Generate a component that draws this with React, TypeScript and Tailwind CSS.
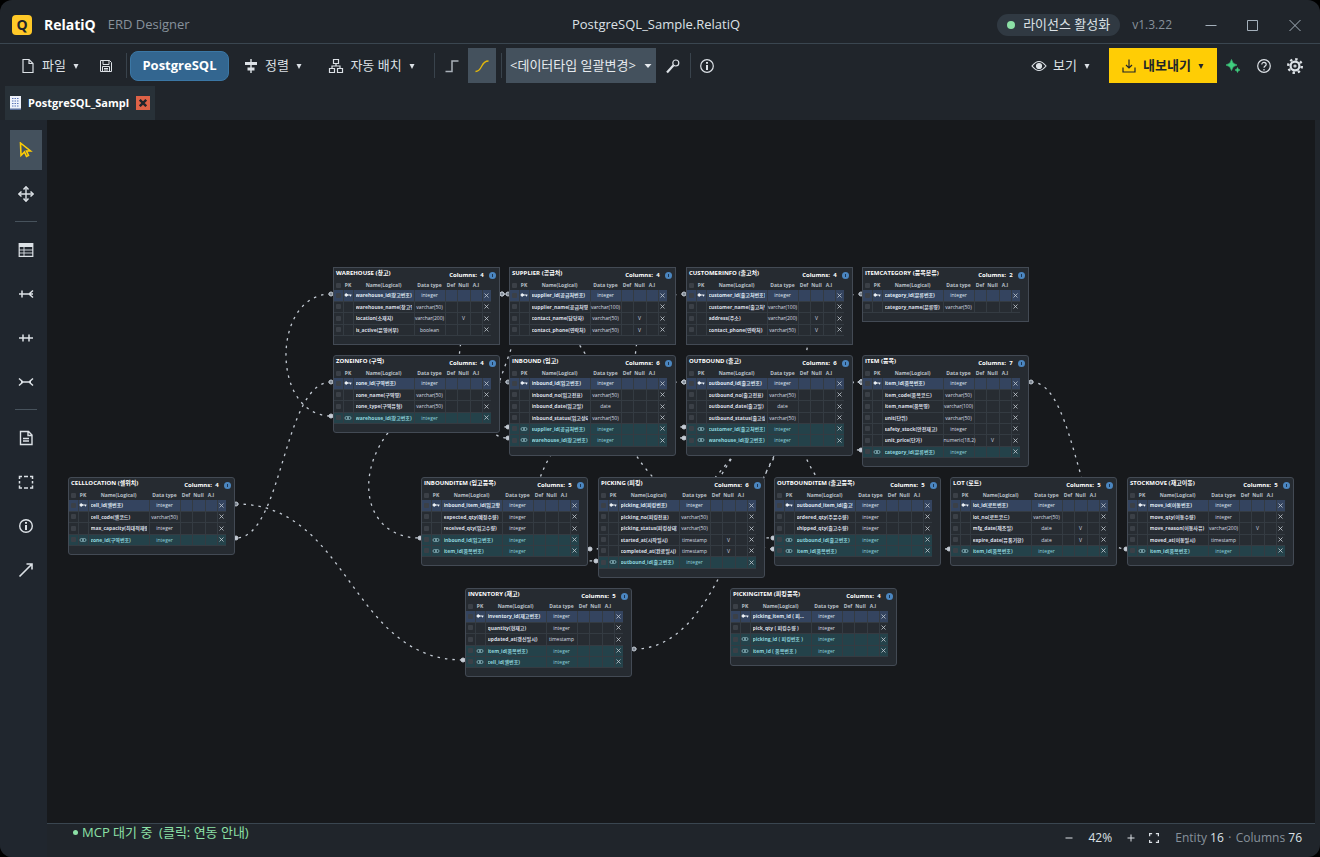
import type { ReactNode } from 'react';

type Kind = 'pk' | 'fk' | '';
type Column = [name: string, type: string, kind?: Kind, nullable?: boolean];

type Entity = {
  title: string;
  x: number;
  y: number;
  square?: boolean;
  columns: Column[];
};

const entities: Entity[] = [
  {
    title: 'WAREHOUSE (창고)',
    x: 286,
    y: 147,
    square: true,
    columns: [
      ['warehouse_id(창고번호)', 'integer', 'pk'],
      ['warehouse_name(창고명)', 'varchar(50)'],
      ['location(소재지)', 'varchar(200)', '', true],
      ['is_active(운영여부)', 'boolean'],
    ],
  },
  {
    title: 'SUPPLIER (공급처)',
    x: 462,
    y: 147,
    square: true,
    columns: [
      ['supplier_id(공급처번호)', 'integer', 'pk'],
      ['supplier_name(공급처명)', 'varchar(100)'],
      ['contact_name(담당자)', 'varchar(50)', '', true],
      ['contact_phone(연락처)', 'varchar(50)', '', true],
    ],
  },
  {
    title: 'CUSTOMERINFO (출고처)',
    x: 639,
    y: 147,
    square: true,
    columns: [
      ['customer_id(출고처번호)', 'integer', 'pk'],
      ['customer_name(출고처명)', 'varchar(100)'],
      ['address(주소)', 'varchar(200)', '', true],
      ['contact_phone(연락처)', 'varchar(50)', '', true],
    ],
  },
  {
    title: 'ITEMCATEGORY (품목분류)',
    x: 815,
    y: 147,
    square: true,
    columns: [
      ['category_id(분류번호)', 'integer', 'pk'],
      ['category_name(분류명)', 'varchar(50)'],
    ],
  },
  {
    title: 'ZONEINFO (구역)',
    x: 286,
    y: 235,
    columns: [
      ['zone_id(구역번호)', 'integer', 'pk'],
      ['zone_name(구역명)', 'varchar(50)'],
      ['zone_type(구역유형)', 'varchar(50)'],
      ['warehouse_id(창고번호)', 'integer', 'fk'],
    ],
  },
  {
    title: 'INBOUND (입고)',
    x: 462,
    y: 235,
    columns: [
      ['inbound_id(입고번호)', 'integer', 'pk'],
      ['inbound_no(입고전표)', 'varchar(50)'],
      ['inbound_date(입고일)', 'date'],
      ['inbound_status(입고상태)', 'varchar(50)'],
      ['supplier_id(공급처번호)', 'integer', 'fk'],
      ['warehouse_id(창고번호)', 'integer', 'fk'],
    ],
  },
  {
    title: 'OUTBOUND (출고)',
    x: 639,
    y: 235,
    columns: [
      ['outbound_id(출고번호)', 'integer', 'pk'],
      ['outbound_no(출고전표)', 'varchar(50)'],
      ['outbound_date(출고일)', 'date'],
      ['outbound_status(출고상태)', 'varchar(50)'],
      ['customer_id(출고처번호)', 'integer', 'fk'],
      ['warehouse_id(창고번호)', 'integer', 'fk'],
    ],
  },
  {
    title: 'ITEM (품목)',
    x: 815,
    y: 235,
    columns: [
      ['item_id(품목번호)', 'integer', 'pk'],
      ['item_code(품목코드)', 'varchar(50)'],
      ['item_name(품목명)', 'varchar(100)'],
      ['unit(단위)', 'varchar(50)'],
      ['safety_stock(안전재고)', 'integer'],
      ['unit_price(단가)', 'numeric(18,2)', '', true],
      ['category_id(분류번호)', 'integer', 'fk'],
    ],
  },
  {
    title: 'CELLLOCATION (셀위치)',
    x: 21,
    y: 357,
    columns: [
      ['cell_id(셀번호)', 'integer', 'pk'],
      ['cell_code(셀코드)', 'varchar(50)'],
      ['max_capacity(최대적재량)', 'integer'],
      ['zone_id(구역번호)', 'integer', 'fk'],
    ],
  },
  {
    title: 'INBOUNDITEM (입고품목)',
    x: 374,
    y: 357,
    columns: [
      ['inbound_item_id(입고항목)', 'integer', 'pk'],
      ['expected_qty(예정수량)', 'integer'],
      ['received_qty(입고수량)', 'integer'],
      ['inbound_id(입고번호)', 'integer', 'fk'],
      ['item_id(품목번호)', 'integer', 'fk'],
    ],
  },
  {
    title: 'PICKING (피킹)',
    x: 551,
    y: 357,
    columns: [
      ['picking_id(피킹번호)', 'integer', 'pk'],
      ['picking_no(피킹전표)', 'varchar(50)'],
      ['picking_status(피킹상태)', 'varchar(50)'],
      ['started_at(시작일시)', 'timestamp', '', true],
      ['completed_at(완료일시)', 'timestamp', '', true],
      ['outbound_id(출고번호)', 'integer', 'fk'],
    ],
  },
  {
    title: 'OUTBOUNDITEM (출고품목)',
    x: 727,
    y: 357,
    columns: [
      ['outbound_item_id(출고항목)', 'integer', 'pk'],
      ['ordered_qty(주문수량)', 'integer'],
      ['shipped_qty(출고수량)', 'integer'],
      ['outbound_id(출고번호)', 'integer', 'fk'],
      ['item_id(품목번호)', 'integer', 'fk'],
    ],
  },
  {
    title: 'LOT (로트)',
    x: 903,
    y: 357,
    columns: [
      ['lot_id(로트번호)', 'integer', 'pk'],
      ['lot_no(로트코드)', 'varchar(50)'],
      ['mfg_date(제조일)', 'date', '', true],
      ['expire_date(유통기한)', 'date', '', true],
      ['item_id(품목번호)', 'integer', 'fk'],
    ],
  },
  {
    title: 'STOCKMOVE (재고이동)',
    x: 1080,
    y: 357,
    columns: [
      ['move_id(이동번호)', 'integer', 'pk'],
      ['move_qty(이동수량)', 'integer'],
      ['move_reason(이동사유)', 'varchar(200)', '', true],
      ['moved_at(이동일시)', 'timestamp'],
      ['item_id(품목번호)', 'integer', 'fk'],
    ],
  },
  {
    title: 'INVENTORY (재고)',
    x: 418,
    y: 468,
    columns: [
      ['inventory_id(재고번호)', 'integer', 'pk'],
      ['quantity(현재고)', 'integer'],
      ['updated_at(갱신일시)', 'timestamp'],
      ['item_id(품목번호)', 'integer', 'fk'],
      ['cell_id(셀번호)', 'integer', 'fk'],
    ],
  },
  {
    title: 'PICKINGITEM (피킹품목)',
    x: 683,
    y: 468,
    columns: [
      ['picking_item_id ( 피...', 'integer', 'pk'],
      ['pick_qty ( 피킹수량 )', 'integer'],
      ['picking_id ( 피킹번호 )', 'integer', 'fk'],
      ['item_id ( 품목번호 )', 'integer', 'fk'],
    ],
  },
];

// x1, y1, x2, y2, then the x of both control points
const relations: number[][] = [
  [284, 174, 284, 296, 224, 224],
  [284, 262, 189, 418, 236, 236],
  [189, 384, 416, 540, 303, 303],
  [587, 529, 814, 262, 700, 700],
  [984, 262, 1079, 429, 1031, 1031],
  [814, 262, 902, 429, 687, 775],
  [814, 262, 726, 429, 751, 663],
  [814, 262, 543, 429, 678, 678],
  [814, 262, 640, 440, 680, 640],
  [637, 262, 726, 418, 500, 625],
  [637, 262, 549, 441, 494, 432],
  [461, 262, 373, 418, 306, 286],
  [461, 174, 461, 307, 396, 396],
  [455, 174, 461, 318, 513, 403],
  [455, 174, 637, 318, 546, 546],
  [637, 174, 637, 307, 572, 572],
  [814, 174, 814, 330, 739, 739],
];

const rowColor = {
  pk: 'bg-[#34445f] text-[#dfe7f2]',
  fk: 'bg-[#24424a] text-[#8fd3dc]',
  '': 'bg-[#272c32] text-[#d9dee4]',
};

function Svg({ children, size = 16 }: { children: ReactNode; size?: number }) {
  return (
    <svg
      width={size}
      height={size}
      viewBox="0 0 16 16"
      fill="none"
      stroke="currentColor"
      strokeWidth="1.2"
      className="shrink-0"
      aria-hidden="true"
    >
      {children}
    </svg>
  );
}

function KindIcon({ kind }: { kind: Kind }) {
  if (kind === 'pk') {
    return (
      <svg viewBox="0 0 8 6" className="mx-auto h-[6px] w-2" fill="none" stroke="#eef2f6">
        <circle cx="2.2" cy="3" r="1.2" fill="#eef2f6" />
        <path d="M3 3h4.5M6.5 3v1.4" />
      </svg>
    );
  }
  if (kind === 'fk') {
    return (
      <svg viewBox="0 0 8 6" className="mx-auto h-[6px] w-2" fill="none" stroke="#8fb9c2" strokeWidth="0.8">
        <rect x="1" y="1.5" width="3.4" height="3" rx="1.5" />
        <rect x="3.6" y="1.5" width="3.4" height="3" rx="1.5" />
      </svg>
    );
  }
  return null;
}

function TinyCheck({ label }: { label: string }) {
  return (
    <input
      type="checkbox"
      aria-label={label}
      className="mx-auto block h-[5px] w-[5px] appearance-none rounded-[1px] bg-[#3b4047]"
    />
  );
}

function EntityCard({ entity }: { entity: Entity }) {
  const { title, x, y, square, columns } = entity;

  return (
    <section
      className={`absolute w-[167px] border border-[#434a54] bg-[#262b31] pb-2 ${square ? '' : 'rounded-[3px]'}`}
      style={{ left: x, top: y }}
    >
      <header className="flex h-3 items-center pr-[3px] pl-0.5 text-[6px] leading-[10px] font-bold text-white">
        <h2 className="mr-auto pb-0.5 whitespace-nowrap">{title}</h2>
        <span className="pt-0.5 whitespace-nowrap">Columns:</span>
        <span className="w-[10px] pt-0.5 text-center">{columns.length}</span>
        <button
          type="button"
          aria-label={`${title} 정보`}
          className="mt-0.5 ml-0.5 flex h-[7px] w-[7px] items-center justify-center rounded-full bg-[#4b86c0]"
        >
          <span className="h-[3px] w-px bg-[#1d3552]" />
        </button>
      </header>

      <table className="w-[157px] table-fixed border-collapse text-[5px] leading-[8px]">
        <colgroup>
          <col className="w-[9px]" />
          <col className="w-[10px]" />
          <col className="w-[61px]" />
          <col className="w-[31px]" />
          <col className="w-3" />
          <col className="w-[13px]" />
          <col className="w-3" />
          <col className="w-[9px]" />
        </colgroup>
        <thead>
          <tr className="h-[10px] text-[#b9c0c8]">
            <th className="p-0">
              <TinyCheck label="전체 선택" />
            </th>
            <th className="p-0">PK</th>
            <th className="p-0">Name(Logical)</th>
            <th className="p-0 whitespace-nowrap">Data type</th>
            <th className="p-0">Def</th>
            <th className="p-0">Null</th>
            <th className="p-0">A.I</th>
            <th className="p-0" />
          </tr>
        </thead>
        <tbody>
          {columns.map(([name, type, kind = '', nullable]) => (
            <tr key={name} className={`h-[11px] nth-[3n]:h-3 ${rowColor[kind]}`}>
              <td className="border-b border-[#343b42] p-0">
                <TinyCheck label={name} />
              </td>
              <td className="border border-t-0 border-[#343b42] p-0">
                <KindIcon kind={kind} />
              </td>
              <td className="border border-t-0 border-[#343b42] p-0 pl-0.5 font-bold">
                <span className="block w-14 overflow-hidden whitespace-nowrap">{name}</span>
              </td>
              <td className="border border-t-0 border-[#343b42] p-0 text-center whitespace-nowrap">{type}</td>
              <td className="border border-t-0 border-[#343b42] p-0" />
              <td className="border border-t-0 border-[#343b42] p-0 text-center">{nullable ? 'V' : ''}</td>
              <td className="border border-t-0 border-[#343b42] p-0" />
              <td className="border-b border-[#343b42] p-0">
                <button type="button" aria-label={`${name} 삭제`} className="mx-auto block h-[5px] w-[5px]">
                  <svg viewBox="0 0 5 5" stroke="#c3cad2" strokeWidth="0.8">
                    <path d="M.5.5l4 4M4.5.5l-4 4" />
                  </svg>
                </button>
              </td>
            </tr>
          ))}
        </tbody>
      </table>
    </section>
  );
}

function Relations() {
  return (
    <svg className="absolute inset-0 h-full w-full" fill="none" stroke="#c4cbd4">
      {relations.map(([x1, y1, x2, y2, c1, c2], i) => (
        <g key={i}>
          <path d={`M${x1} ${y1}C${c1} ${y1} ${c2} ${y2} ${x2} ${y2}`} strokeDasharray="2.5 5" strokeWidth="1.3" />
          <circle cx={x1} cy={y1} r="2" fill="#7d8691" />
          <circle cx={x2} cy={y2} r="2" fill="#c4cbd4" />
        </g>
      ))}
    </svg>
  );
}

function TitleBar() {
  return (
    <header className="grid h-11 shrink-0 grid-cols-[1fr_auto_1fr] items-center border-b border-[#3a4650] pt-1.5 pr-5 pl-3">
      <div className="flex items-center">
        <div className="flex h-5 w-5 items-center justify-center rounded-[4px] bg-[#ffc928] text-sm font-bold text-[#20252b]">
          Q
        </div>
        <h1 className="ml-3 text-sm font-bold text-white">RelatiQ</h1>
        <span className="ml-3 text-[13px] text-[#87919b]">ERD Designer</span>
      </div>
      <p className="text-[13px] text-[#dce1e6]">PostgreSQL_Sample.RelatiQ</p>
      <div className="-mr-4 flex items-center justify-end">
        <div className="flex h-[22px] items-center gap-2 rounded-full bg-[#303942] px-[10px] text-[13px] text-[#dce1e6]">
          <span className="h-2 w-2 rounded-full bg-[#8ce0a6]" />
          라이선스 활성화
        </div>
        <span className="mr-[18px] ml-3 text-xs text-[#87919b]">v1.3.22</span>
        <button type="button" aria-label="최소화" className="flex h-8 w-[42px] items-center justify-center text-[#a4b0bb]">
          <Svg>
            <path d="M2.500 8.500h11" strokeWidth="1" />
          </Svg>
        </button>
        <button type="button" aria-label="최대화" className="flex h-8 w-[42px] items-center justify-center text-[#a4b0bb]">
          <Svg>
            <path d="M2.500 3.500h10v10h-10z" strokeWidth="1" />
          </Svg>
        </button>
        <button type="button" aria-label="닫기" className="flex h-8 w-[42px] items-center justify-center text-[#a4b0bb]">
          <Svg>
            <path d="M2.500 3l11 11M13.500 3l-11 11" strokeWidth="1" />
          </Svg>
        </button>
      </div>
    </header>
  );
}

function Caret() {
  return (
    <svg viewBox="0 0 8 8" className="h-2 w-2 shrink-0" fill="currentColor" aria-hidden="true">
      <path d="M1.500 2h5L4 7z" />
    </svg>
  );
}

function Divider() {
  return <span className="h-[25px] w-px shrink-0 bg-[#39434c]" />;
}

const toolButton = 'flex h-[35px] shrink-0 items-center justify-center whitespace-nowrap';

function Toolbar() {
  return (
    <div className="flex h-[42px] shrink-0 items-center pt-px pr-2.5 pl-3 text-[13px] text-[#dce1e6]">
      <button type="button" className={`${toolButton} w-[76px] gap-1.5`}>
        <Svg>
          <path d="M3 1.500h6L13 5.500v9H3zM9 1.500v4h4" />
        </Svg>
        파일
        <Caret />
      </button>
      <button type="button" aria-label="저장" className={`${toolButton} w-9`}>
        <Svg>
          <path d="M2.500 2.500h9l2 2v9h-11zM5 2.500v4h6v-4M4.500 13.500v-5h7v5M6 10.500h4M6 12h4" strokeWidth="1" />
        </Svg>
      </button>
      <span className="w-0.5" />
      <Divider />
      <button
        type="button"
        className="mx-[3px] h-[30px] w-[99px] shrink-0 rounded-lg border border-[#3b77a5] bg-[#336690] font-bold text-white"
      >
        PostgreSQL
      </button>
      <button type="button" className={`${toolButton} w-[82px] gap-1.5`}>
        <Svg>
          <path d="M8 1v14" strokeWidth="1.4" />
          <path d="M2 4h12v3H2zM4.500 9.500h7v3h-7z" fill="currentColor" stroke="none" />
        </Svg>
        정렬
        <Caret />
      </button>
      <button type="button" className={`${toolButton} w-[116px] gap-1.5`}>
        <Svg>
          <path d="M5.500 1.500h5v4h-5zM1.500 10.500h5v4h-5zM9.500 10.500h5v4h-5zM8 5.500V8M4 10.500V8h8v2.500" />
        </Svg>
        자동 배치
        <Caret />
      </button>
      <span className="w-1" />
      <Divider />
      <button type="button" aria-label="직각선" className={`${toolButton} w-[33px] text-[#a9b1b9]`}>
        <Svg>
          <path d="M1.500 13.500H8V3h6.500" strokeWidth="1.500" />
        </Svg>
      </button>
      <button type="button" aria-label="곡선" className={`${toolButton} w-7 bg-[#44515d] text-[#e3b80c]`}>
        <Svg>
          <path d="M1.500 13.500C9 13.500 6 3 14.500 3" strokeWidth="1.300" />
        </Svg>
      </button>
      <span className="w-[5px]" />
      <Divider />
      <div className="relative ml-1 h-[35px] w-[150px] shrink-0">
        <select
          aria-label="데이터타입 일괄변경"
          className="h-full w-full appearance-none bg-[#44515d] pl-1 text-[13px] text-[#e6eaee]"
        >
          <option>&lt;데이터타입 일괄변경&gt;</option>
        </select>
        <svg viewBox="0 0 8 4" className="pointer-events-none absolute top-4 right-1 h-1 w-2" fill="#e6eaee">
          <path d="M.5 0h7L4 4z" />
        </svg>
      </div>
      <button type="button" aria-label="도구 설정" className={`${toolButton} w-[34px]`}>
        <Svg>
          <circle cx="10.800" cy="5" r="3" />
          <path d="M2 14.500L8.500 7.300" strokeWidth="2.200" />
        </Svg>
      </button>
      <Divider />
      <button type="button" aria-label="정보" className={`${toolButton} w-8`}>
        <Svg>
          <circle cx="8" cy="8" r="6.300" />
          <path d="M8 7v5M8 4v1.700" strokeWidth="2" />
        </Svg>
      </button>

      <div className="ml-auto flex items-center">
        <button type="button" className={`${toolButton} w-[80px] gap-1.5`}>
          <Svg>
            <path d="M1 8q7-9 14 0q-7 9-14 0z" />
            <circle cx="8" cy="8" r="2.500" fill="currentColor" />
          </Svg>
          보기
          <Caret />
        </button>
        <button type="button" className={`${toolButton} mr-1 ml-2 w-[108px] gap-1.5 bg-[#ffcd05] font-bold text-[#20252b]`}>
          <Svg>
            <path d="M8 1.500v8M5 7l3 3 3-3M2 9.500v4.500h12V9.500" />
          </Svg>
          내보내기
          <Caret />
        </button>
        <button type="button" aria-label="AI" className={`${toolButton} w-6 text-[#3fcf7f]`}>
          <Svg>
            <path
              d="M6.500 1.500q.8 4.700 5.500 5.500q-4.700.8-5.500 5.500q-.8-4.700-5.500-5.500q4.700-.8 5.500-5.500zM12.500 9.500q.3 2.200 2.500 2.500q-2.200.3-2.500 2.500q-.3-2.200-2.500-2.500q2.200-.3 2.500-2.500z"
              fill="currentColor"
              strokeWidth="0.600"
            />
          </Svg>
        </button>
        <button type="button" aria-label="도움말" className={`${toolButton} ml-1 w-[30px]`}>
          <Svg>
            <circle cx="8" cy="8" r="6.300" />
            <path d="M5.800 6.500c0-3 4.400-2.700 4.400 0C10.200 8 8 8 8 9.800M8 11v1.400" />
          </Svg>
        </button>
        <button type="button" aria-label="설정" className={`${toolButton} w-[31px]`}>
          <Svg>
            <circle cx="8" cy="8" r="6.800" strokeWidth="2.400" strokeDasharray="2.400 2.940" />
            <circle cx="8" cy="8" r="4.400" strokeWidth="2.200" />
            <circle cx="8" cy="8" r="1" />
          </Svg>
        </button>
      </div>
    </div>
  );
}

function Tabs() {
  return (
    <nav className="flex h-[34px] shrink-0 pl-[5px]">
      <div className="flex w-[150px] items-center bg-[#283138] pr-[5px] pl-[5px]">
        <svg viewBox="0 0 11 14" className="h-[14px] w-[11px] shrink-0">
          <path d="M0 0h11v14H0z" fill="#eef2fb" />
          <path d="M2 2.500h7M2 5h7M2 7.500h7M2 10h7" stroke="#5a74b8" strokeDasharray="1.500 1" />
          <path d="M0 12.500h11v1.500H0z" fill="#5a6f9c" />
        </svg>
        <a href="#sample" className="ml-[7px] flex-1 text-[11px] font-bold whitespace-nowrap text-white">
          PostgreSQL_Sampl
        </a>
        <button type="button" aria-label="탭 닫기" className="flex h-[14px] w-[14px] shrink-0 items-center justify-center bg-[#dd6247]">
          <svg viewBox="0 0 8 8" className="h-2 w-2" stroke="#20252b" strokeWidth="2.400">
            <path d="M.8.8l6.400 6.400M7.200.8L.8 7.200" />
          </svg>
        </button>
      </div>
    </nav>
  );
}

function SideButton({ label, active, children }: { label: string; active?: boolean; children: ReactNode }) {
  return (
    <button
      type="button"
      aria-label={label}
      className={`flex h-10 w-8 items-center justify-center ${active ? 'bg-[#44515d] text-[#ffcd05]' : 'text-[#dce1e6]'}`}
    >
      <Svg>{children}</Svg>
    </button>
  );
}

function SideBar() {
  return (
    <aside className="flex w-[47px] shrink-0 flex-col items-center gap-1 bg-[#20262e] pt-2.5 pl-[5px]">
      <SideButton label="선택" active>
        <path d="M2.500 1L12.500 9H8.500l2 4.500-2 1-2-4.500-3.500 3.500z" strokeWidth="1.600" />
      </SideButton>
      <SideButton label="이동">
        <path d="M8 1v14M1 8h14" strokeWidth="1.400" />
        <path d="M5.500 3.500L8 .8l2.500 2.700M5.500 12.500L8 15.200l2.500-2.700M3.500 5.500L.8 8l2.700 2.500M12.500 5.500L15.200 8l-2.700 2.500" strokeWidth="1.500" />
      </SideButton>
      <hr className="mt-[3px] mb-1 w-[22px] border-[#47525c]" />
      <SideButton label="엔티티">
        <path d="M1.200 1.700h13.600v12.600H1.200z" />
        <path d="M6 5v9M1 8h14M1 11h14" strokeWidth="0.900" />
        <path d="M1 1.500h14V5H1z" fill="currentColor" stroke="none" />
      </SideButton>
      <SideButton label="일대다">
        <path d="M1 8h14M4 4.500v7M15 4.500L11 8l4 3.500" strokeWidth="1.500" />
      </SideButton>
      <SideButton label="일대일">
        <path d="M1 8h14M5 4.500v7M11 4.500v7" strokeWidth="1.500" />
      </SideButton>
      <SideButton label="다대다">
        <path d="M3 8h10M1 4.500L5 8l-4 3.500M15 4.500L11 8l4 3.500" strokeWidth="1.500" />
      </SideButton>
      <hr className="mt-[3px] mb-1 w-[22px] border-[#47525c]" />
      <SideButton label="메모">
        <path d="M2.500 1.500h8l3.500 3.500v9.500H2.500zM10 1.500v4h4M5 8.500h6M5 11h6" strokeWidth="1.400" />
      </SideButton>
      <SideButton label="영역">
        <path
          d="M1.500 5V2.500H4M12 2.500h2.500V5M14.500 11.500V14H12M4 14H1.500v-2.500M6 2.500h4M6 14h4M1.500 7v2.500M14.500 7v2.500"
          strokeWidth="1.500"
        />
      </SideButton>
      <SideButton label="정보">
        <circle cx="8" cy="8" r="6.300" strokeWidth="1.400" />
        <path d="M8 7v5M8 4v1.700" strokeWidth="2" />
      </SideButton>
      <SideButton label="연결선">
        <path d="M1.500 14.500L14 2M8.500 2H14v5.500" strokeWidth="1.600" />
      </SideButton>
    </aside>
  );
}

function StatusBar() {
  return (
    <footer className="flex h-[34px] shrink-0 items-center border-t border-[#3a4650] pr-[13px] pl-[26px] text-xs text-[#dce1e6]">
      <button type="button" className="flex items-center gap-1 self-start text-[13px] leading-4 whitespace-pre text-[#8ce0a6]">
        <span className="h-[5px] w-[5px] rounded-full bg-[#8ce0a6]" />
        MCP 대기 중  (클릭: 연동 안내)
      </button>
      <div className="ml-auto flex items-center pb-1.5">
        <button type="button" aria-label="축소" className="flex w-4 justify-center">
          <Svg size={8}>
            <path d="M1 8h14" strokeWidth="2" />
          </Svg>
        </button>
        <span className="w-[46px] text-center">42%</span>
        <button type="button" aria-label="확대" className="flex w-4 justify-center">
          <Svg size={8}>
            <path d="M1 8h14M8 1v14" strokeWidth="2" />
          </Svg>
        </button>
        <button type="button" aria-label="전체 화면" className="ml-2 flex w-[14px] justify-center">
          <Svg size={10}>
            <path d="M1 5V1h4M11 1h4v4M15 11v4h-4M5 15H1v-4" strokeWidth="2" />
          </Svg>
        </button>
        <p className="ml-[14px] text-[#87919b]">
          Entity <span className="text-[#dce1e6]">16</span>
        </p>
        <span className="w-3 text-center text-[#87919b]">·</span>
        <p className="text-[#87919b]">
          Columns <span className="text-[#dce1e6]">76</span>
        </p>
      </div>
    </footer>
  );
}

export default function App() {
  return (
    <div className="h-screen bg-black font-['Open_Sans','Noto_Sans_CJK_KR',sans-serif]">
      <div className="flex h-full flex-col overflow-hidden rounded-xl bg-[#20252b]">
        <TitleBar />
        <Toolbar />
        <Tabs />
        <div className="flex min-h-0 flex-1">
          <SideBar />
          <div className="flex min-w-0 flex-1 flex-col pr-[5px]">
            <main className="relative flex-1 overflow-hidden bg-[#17191c]">
              <Relations />
              {entities.map((entity) => (
                <EntityCard key={entity.title} entity={entity} />
              ))}
            </main>
            <StatusBar />
          </div>
        </div>
      </div>
    </div>
  );
}
